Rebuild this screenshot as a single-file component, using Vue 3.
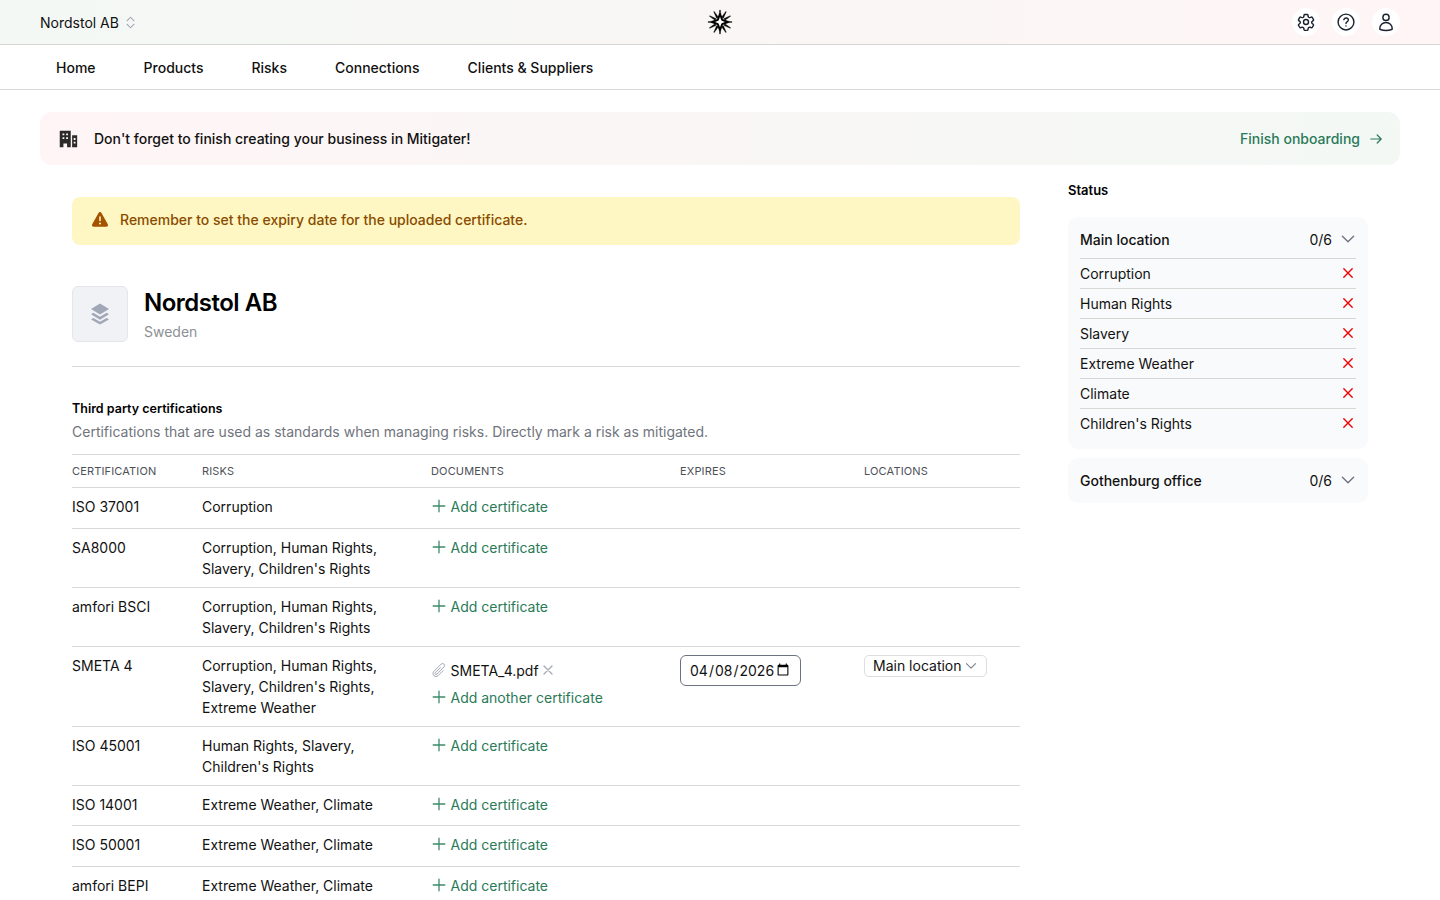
<template>
  <div class="page">
    <header class="topbar">
      <div class="org">
        <span>Nordstol AB</span>
        <svg class="updown" viewBox="0 0 20 20" fill="none" stroke="currentColor" stroke-width="1.4" stroke-linecap="round" stroke-linejoin="round">
          <path d="M5.5 7.5 10 3l4.500 4.500M5.500 12.500 10 17l4.500-4.500" />
        </svg>
      </div>
      <svg class="logo" viewBox="0 0 26 26">
        <path v-for="s in spokes" :key="s.id" :d="s.d" fill="#000" stroke="#000" stroke-width=".4" stroke-linejoin="round" />
        <path d="M13 5.200 15.200 10.800 20.800 13l-5.600 2.200L13 20.800l-2.200-5.600L5.200 13l5.600-2.200z" fill="#fff" stroke="#000" stroke-width="1.900" stroke-linejoin="round" />
      </svg>
      <div class="top-icons">
        <button class="round">
          <svg viewBox="0 0 24 24" fill="none" stroke="currentColor" stroke-width="1.7" stroke-linecap="round" stroke-linejoin="round">
            <path d="M9.6 3.900c.1-.5.6-.9 1.100-.9h2.600c.5 0 1 .4 1.100.9l.2 1.500c.1.400.3.700.6.900l.5.3c.3.200.7.200 1.100.1l1.400-.5c.5-.2 1.100 0 1.400.5l1.300 2.200c.3.500.2 1.100-.3 1.400l-1.200.9c-.3.200-.5.600-.5 1v.6c0 .4.200.8.500 1l1.200.9c.4.300.6.900.3 1.400l-1.300 2.200c-.3.500-.9.700-1.400.5l-1.400-.5c-.4-.1-.8-.1-1.100.1l-.5.3c-.3.200-.5.500-.6.900l-.2 1.500c-.1.500-.6.900-1.100.9h-2.600c-.5 0-1-.4-1.100-.9l-.2-1.500c-.1-.4-.3-.7-.6-.9l-.5-.3c-.3-.2-.7-.2-1.100-.1l-1.400.5c-.5.200-1.100 0-1.400-.5l-1.300-2.200c-.3-.5-.2-1.100.3-1.400l1.200-.9c.3-.2.5-.6.5-1v-.6c0-.4-.2-.8-.5-1l-1.200-.9c-.4-.3-.6-.9-.3-1.400l1.300-2.200c.3-.5.9-.7 1.400-.5l1.400.5c.4.100.8.100 1.100-.1l.5-.3c.3-.2.5-.5.6-.9z" />
            <circle cx="12" cy="12" r="3" />
          </svg>
        </button>
        <button class="round">
          <svg viewBox="0 0 24 24" fill="none" stroke="currentColor" stroke-width="1.700" stroke-linecap="round" stroke-linejoin="round">
            <circle cx="12" cy="12" r="9.500" />
            <path d="M9.400 9.200c.6-1.300 1.500-1.900 2.700-1.900 1.500 0 2.700 1 2.700 2.300 0 1.100-.7 1.700-1.600 2.300-.8.500-1.200 1-1.200 1.900" />
            <path d="M12 16.800h.01" />
          </svg>
        </button>
        <button class="round">
          <svg viewBox="0 0 24 24" fill="none" stroke="currentColor" stroke-width="1.700" stroke-linecap="round" stroke-linejoin="round">
            <circle cx="12" cy="6.500" r="3.750" />
            <path d="M4.500 20.100a7.500 7.500 0 0 1 15 0c0 .5-.3.8-.7.9a21 21 0 0 1-13.600 0c-.4-.1-.7-.4-.7-.9z" />
          </svg>
        </button>
      </div>
    </header>

    <nav class="tabs">
      <a v-for="tab in tabs" :key="tab">{{ tab }}</a>
    </nav>

    <div class="banner">
      <div class="banner-msg">
        <svg viewBox="0 0 24 24" fill="currentColor">
          <path fill-rule="evenodd" d="M3 3h12v18h-4v-4H7v4H3zm3 3v2h2V6zm4 0v2h2V6zM6 10v2h2v-2zm4 0v2h2v-2z" />
          <path fill-rule="evenodd" d="M16.500 8H22v13h-5.500zm1.700 3v2h2v-2zm0 4v2h2v-2z" />
        </svg>
        <span>Don't forget to finish creating your business in Mitigater!</span>
      </div>
      <a class="banner-link">
        Finish onboarding
        <svg viewBox="0 0 20 20" fill="none" stroke="currentColor" stroke-width="1.500" stroke-linecap="round" stroke-linejoin="round">
          <path d="M3.500 10h13M11.500 5l5 5-5 5" />
        </svg>
      </a>
    </div>

    <main class="content">
      <section class="left">
        <div class="warning">
          <svg viewBox="0 0 20 20" fill="currentColor">
            <path fill-rule="evenodd" d="M8.500 2.900c.7-1.200 2.300-1.200 3 0l6.300 11.300c.7 1.200-.2 2.600-1.500 2.600H3.700c-1.300 0-2.200-1.400-1.500-2.600zM10 6.200c-.4 0-.8.300-.8.800v3.500c0 .4.300.8.800.8s.8-.3.8-.8V7c0-.4-.3-.8-.8-.8zm0 8.300a1 1 0 1 0 0-2 1 1 0 0 0 0 2z" />
          </svg>
          <span>Remember to set the expiry date for the uploaded certificate.</span>
        </div>

        <div class="company">
          <div class="company-icon">
            <svg viewBox="0 0 20 22" fill="currentColor">
              <path d="M10 0.500 19 6 10 11.500 1 6z" />
              <path d="M3.300 9.700 1 11.200l9 5.500 9-5.500-2.300-1.500L10 13.800z" />
              <path d="M3.300 15 1 16.500l9 5 9-5L16.700 15 10 18.800z" />
            </svg>
          </div>
          <div>
            <h1>Nordstol AB</h1>
            <p>Sweden</p>
          </div>
        </div>

        <h2>Third party certifications</h2>
        <p class="sub">Certifications that are used as standards when managing risks. Directly mark a risk as mitigated.</p>

        <table>
          <thead>
            <tr>
              <th class="c1">Certification</th>
              <th class="c2">Risks</th>
              <th class="c3">Documents</th>
              <th class="c4">Expires</th>
              <th class="c5">Locations</th>
            </tr>
          </thead>
          <tbody>
            <tr v-for="row in rows" :key="row.name">
              <td>{{ row.name }}</td>
              <td class="risks">{{ row.risks }}</td>
              <td class="docs">
                <div v-if="row.file" class="file">
                  <svg class="clip" viewBox="0 0 24 24" fill="none" stroke="currentColor" stroke-width="1.500" stroke-linecap="round" stroke-linejoin="round">
                    <path d="m18.375 12.739-7.693 7.693a4.500 4.500 0 0 1-6.364-6.364l10.940-10.940A3 3 0 1 1 19.500 7.372L8.552 18.320m.009-.01-.01.01m5.699-9.941-7.810 7.810a1.500 1.500 0 0 0 2.112 2.130" />
                  </svg>
                  <span>{{ row.file }}</span>
                  <svg class="remove" viewBox="0 0 14 14" fill="none" stroke="currentColor" stroke-width="1.300" stroke-linecap="round">
                    <path d="m3 3 8 8M11 3l-8 8" />
                  </svg>
                </div>
                <a class="add">
                  <svg viewBox="0 0 20 20" fill="none" stroke="currentColor" stroke-width="1.600" stroke-linecap="round">
                    <path d="M10 2.750v14.500M2.750 10h14.500" />
                  </svg>
                  {{ row.file ? 'Add another certificate' : 'Add certificate' }}
                </a>
              </td>
              <td class="expires">
                <input v-if="row.date" type="date" :value="row.date" />
              </td>
              <td class="locations">
                <button v-if="row.location" class="loc">
                  {{ row.location }}
                  <svg viewBox="0 0 20 20" fill="none" stroke="currentColor" stroke-width="1.500" stroke-linecap="round" stroke-linejoin="round">
                    <path d="m3.500 6.500 6.500 6.500 6.500-6.500" />
                  </svg>
                </button>
              </td>
            </tr>
          </tbody>
        </table>
      </section>

      <aside class="right">
        <h3>Status</h3>
        <div v-for="group in status" :key="group.name" class="panel">
          <div class="panel-head">
            <span class="panel-name">{{ group.name }}</span>
            <span class="panel-count">{{ group.count }}</span>
            <svg viewBox="0 0 20 20" fill="none" stroke="currentColor" stroke-width="1.700" stroke-linecap="round" stroke-linejoin="round">
              <path d="m3 6.500 7 7 7-7" />
            </svg>
          </div>
          <ul v-if="group.items.length">
            <li v-for="item in group.items" :key="item">
              <span>{{ item }}</span>
              <svg viewBox="0 0 20 20" fill="none" stroke="#f00000" stroke-width="2.300" stroke-linecap="round">
                <path d="m3 3 14 14M17 3 3 17" />
              </svg>
            </li>
          </ul>
        </div>
      </aside>
    </main>
  </div>
</template>

<script setup>
const tabs = ['Home', 'Products', 'Risks', 'Connections', 'Clients & Suppliers']

// logo rays, twelve around the centre, wide at the base
const spokes = Array.from({ length: 12 }, (_, i) => {
  const a = (i * Math.PI) / 6
  const pt = (r, w) => {
    const x = 13 + r * Math.sin(a) + w * Math.cos(a)
    const y = 13 - r * Math.cos(a) + w * Math.sin(a)
    return `${x.toFixed(2)} ${y.toFixed(2)}`
  }
  return { id: i, d: `M${pt(5, -1)}L${pt(12, -0.3)}L${pt(12, 0.3)}L${pt(5, 1)}Z` }
})

const rows = [
  { name: 'ISO 37001', risks: 'Corruption' },
  { name: 'SA8000', risks: "Corruption, Human Rights, Slavery, Children's Rights" },
  { name: 'amfori BSCI', risks: "Corruption, Human Rights, Slavery, Children's Rights" },
  {
    name: 'SMETA 4',
    risks: "Corruption, Human Rights, Slavery, Children's Rights, Extreme Weather",
    file: 'SMETA_4.pdf',
    date: '2026-04-08',
    location: 'Main location'
  },
  { name: 'ISO 45001', risks: "Human Rights, Slavery, Children's Rights" },
  { name: 'ISO 14001', risks: 'Extreme Weather, Climate' },
  { name: 'ISO 50001', risks: 'Extreme Weather, Climate' },
  { name: 'amfori BEPI', risks: 'Extreme Weather, Climate' }
]

const status = [
  {
    name: 'Main location',
    count: '0/6',
    items: ['Corruption', 'Human Rights', 'Slavery', 'Extreme Weather', 'Climate', "Children's Rights"]
  },
  { name: 'Gothenburg office', count: '0/6', items: [] }
]
</script>

<style>
html,
body {
  margin: 0;
  background: #fff;
}
</style>

<style scoped>
.page {
  height: 900px;
  overflow: hidden;
  font-family: Inter, "Liberation Sans", sans-serif;
  font-size: 14px;
  line-height: 20px;
  color: #111;
}

.topbar {
  position: relative;
  height: 44px;
  padding: 0 40px;
  display: flex;
  align-items: center;
  justify-content: space-between;
  background: linear-gradient(90deg, #f3f8f5, #fff5f6);
  border-bottom: 1px solid #d8d6d3;
}

.org {
  margin-top: 2px;
  display: flex;
  align-items: center;
  gap: 4px;
}

.updown {
  width: 15px;
  height: 15px;
  margin-top: -2px;
  color: #9ca3af;
}

.logo {
  position: absolute;
  left: 707px;
  top: 9px;
  width: 26px;
  height: 26px;
}

.top-icons {
  display: flex;
  gap: 12px;
}

.round {
  width: 28px;
  height: 28px;
  padding: 4px;
  border: 0;
  border-radius: 50%;
  background: #fff;
  color: #1a2230;
}

.round svg {
  display: block;
  width: 20px;
  height: 20px;
}

.tabs {
  box-sizing: border-box;
  height: 45px;
  padding: 2px 56px 0;
  display: flex;
  align-items: center;
  gap: 48px;
  border-bottom: 1px solid #d8d8d8;
  font-weight: 500;
}

.banner {
  margin: 22px 40px 0;
  height: 53px;
  padding: 0 16px 0 17px;
  display: flex;
  align-items: center;
  justify-content: space-between;
  border-radius: 12px;
  background: linear-gradient(90deg, #fff5f6, #f3f8f5);
  font-weight: 500;
}

.banner-msg {
  display: flex;
  align-items: center;
  gap: 15px;
}

.banner-msg svg {
  width: 22px;
  height: 22px;
  color: #2b2b2b;
}

.banner-link {
  display: flex;
  align-items: center;
  gap: 8px;
  color: #2a7a58;
}

.banner-link svg {
  width: 16px;
  height: 16px;
}

.content {
  padding: 32px 72px 0;
  display: flex;
  gap: 48px;
}

.left {
  width: 948px;
  flex: none;
}

.warning {
  box-sizing: border-box;
  height: 48px;
  padding: 0 18px 2px;
  display: flex;
  align-items: center;
  gap: 10px;
  border-radius: 8px;
  background: #fef7c3;
  color: #8a4b00;
  font-weight: 500;
}

.warning svg {
  width: 20px;
  height: 20px;
  flex: none;
  color: #a35200;
}

.company {
  margin-top: 41px;
  padding-bottom: 24px;
  display: flex;
  gap: 16px;
  border-bottom: 1px solid #d8d8d8;
}

.company-icon {
  box-sizing: border-box;
  width: 56px;
  height: 56px;
  display: flex;
  align-items: center;
  justify-content: center;
  border: 1px solid #e4e6ea;
  border-radius: 6px;
  background: #f1f2f5;
  color: #a0a7b6;
}

.company-icon svg {
  display: block;
  width: 20px;
  height: 22px;
}

h1 {
  margin: 2px 0 0;
  font-size: 24px;
  line-height: 30px;
  font-weight: 600;
  letter-spacing: -0.5px;
  color: #000;
}

.company p {
  margin: 4px 0 0;
  color: #8d8f94;
}

h2 {
  margin: 32px 0 0;
  font-size: 12.5px;
  line-height: 20px;
  font-weight: 600;
  color: #000;
}

.sub {
  margin: 3px 0 0;
  color: #70747c;
}

table {
  width: 948px;
  margin-top: 12px;
  border-collapse: collapse;
  table-layout: fixed;
}

th {
  height: 32px;
  padding: 0;
  border-top: 1px solid #d8d8d8;
  border-bottom: 1px solid #d8d8d8;
  font-size: 11px;
  line-height: 16px;
  font-weight: 400;
  text-align: left;
  text-transform: uppercase;
  letter-spacing: 0.15px;
  color: #4d5056;
}

.c1 { width: 130px; }
.c2 { width: 229px; }
.c3 { width: 249px; }
.c4 { width: 184px; }

td {
  padding: 8px 0;
  border-bottom: 1px solid #d8d8d8;
  vertical-align: top;
  line-height: 21px;
}

.risks {
  padding-right: 24px;
}

.docs {
  padding-bottom: 10.5px;
}

.add {
  display: flex;
  align-items: center;
  gap: 3.5px;
  color: #2a7a58;
}

.add svg {
  width: 16px;
  height: 16px;
  margin-top: -1px;
  color: #3a8a68;
}

.file {
  height: 31px;
  margin-bottom: 1px;
  display: flex;
  align-items: center;
  gap: 3.500px;
  color: #111;
}

.clip {
  width: 16px;
  height: 16px;
  flex: none;
  color: #a4a9b4;
}

.remove {
  width: 14px;
  height: 14px;
  margin-left: -1px;
  color: #a4a9b4;
}

input[type="date"] {
  display: block;
  box-sizing: border-box;
  width: 121px;
  height: 31px;
  padding: 0 8px;
  border: 1px solid #6b7280;
  border-radius: 6px;
  background: #fff;
  font: inherit;
  color: #111;
}

.loc {
  height: 22px;
  padding: 0 8px;
  display: inline-flex;
  align-items: center;
  gap: 2px;
  vertical-align: top;
  border: 1px solid #dcdee2;
  border-radius: 5px;
  background: #fff;
  font: inherit;
  color: #111;
}

.loc svg {
  width: 14px;
  height: 14px;
  color: #7a808c;
}

.right {
  width: 300px;
  flex: none;
  margin-top: -17px;
}

h3 {
  margin: 0 0 17px;
  font-size: 13px;
  line-height: 20px;
  font-weight: 600;
  color: #000;
}

.panel {
  margin-bottom: 9px;
  padding: 0 12px;
  border-radius: 10px;
  background: #f9fafb;
}

.panel-head {
  height: 45px;
  display: flex;
  align-items: center;
  font-weight: 500;
}

.panel-name {
  flex: 1;
}

.panel-count {
  font-weight: 400;
}

.panel-head svg {
  width: 16px;
  height: 16px;
  margin-left: 8px;
  margin-top: -2px;
  color: #6b7280;
}

ul {
  margin: -4px 0 0;
  padding: 0 0 11px;
  list-style: none;
}

li {
  height: 29px;
  display: flex;
  align-items: center;
  justify-content: space-between;
  border-top: 1px solid #d8d6d3;
}

li svg {
  width: 12px;
  height: 12px;
  margin-right: 2px;
  margin-top: -2px;
}
</style>
